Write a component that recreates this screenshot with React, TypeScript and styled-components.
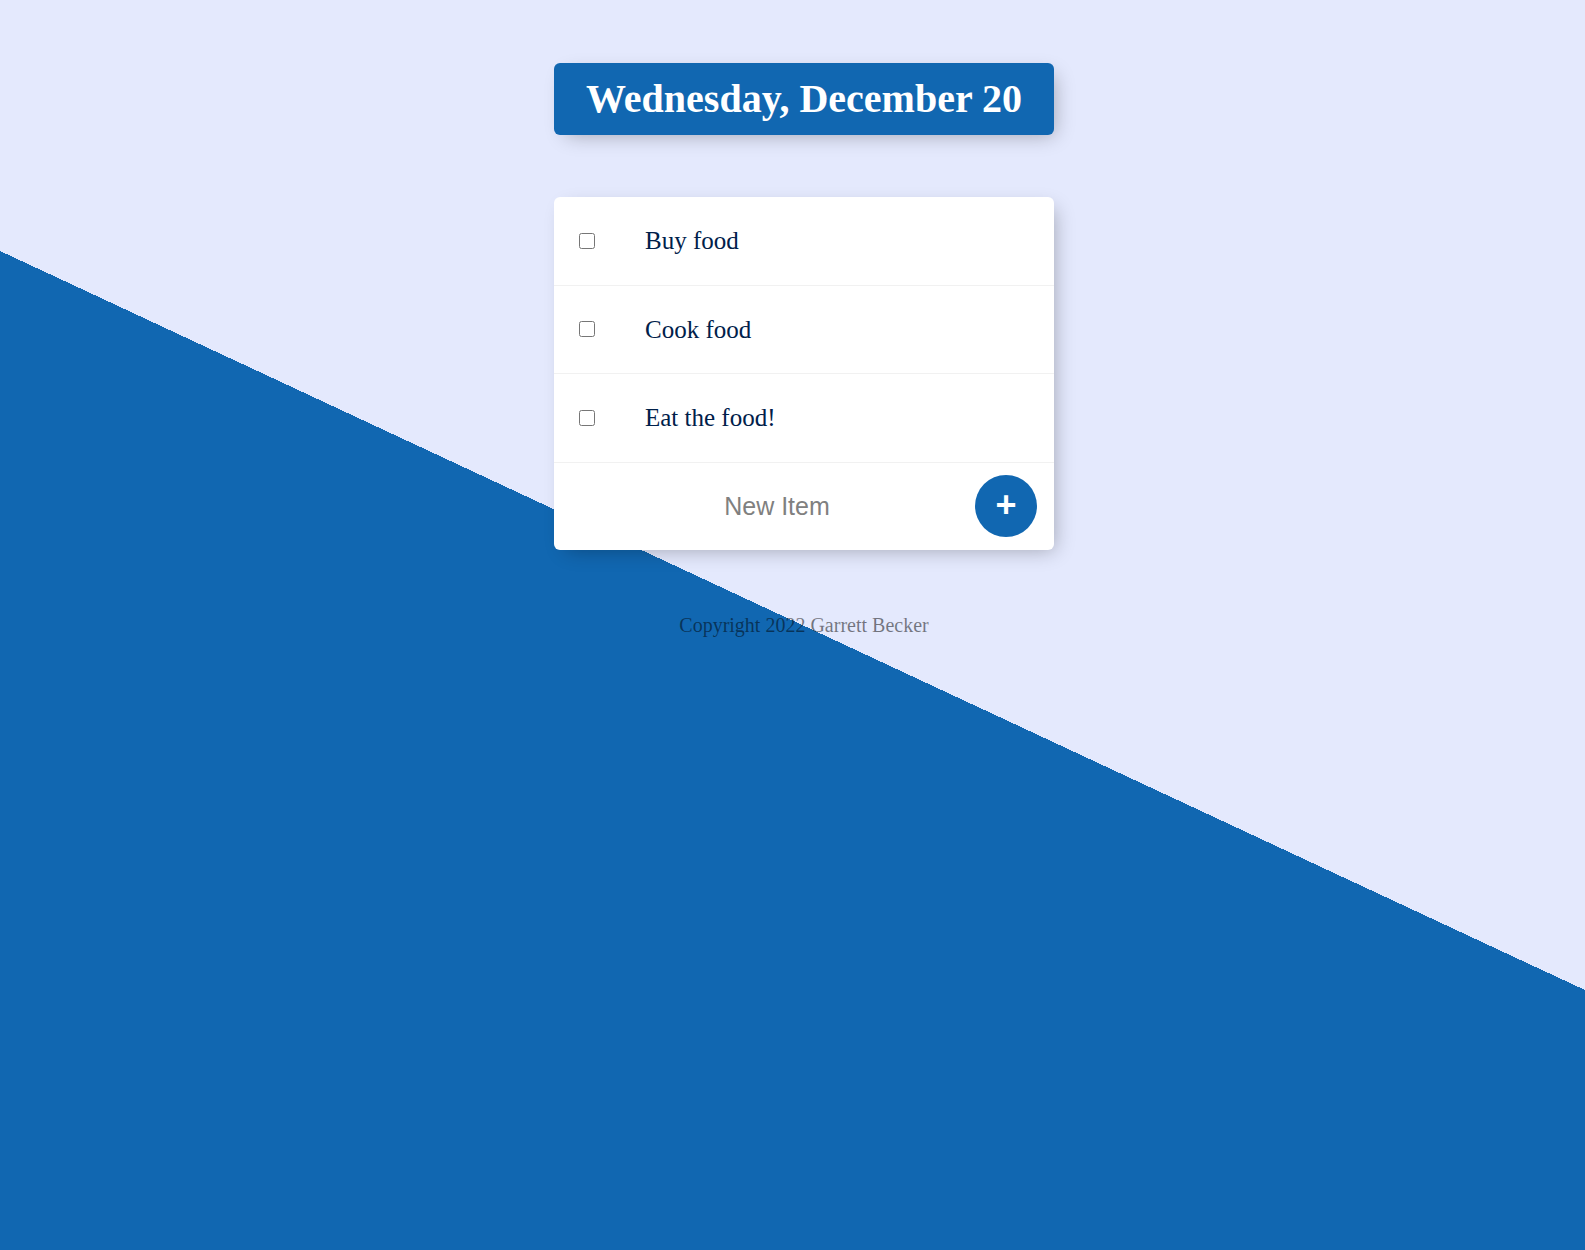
import React, { useState } from "react"
import styled, { createGlobalStyle } from "styled-components"

const BLUE = "#1167b1"
const LIGHT = "#e4e9fd"

const GlobalStyle = createGlobalStyle`
  html {
    min-height: 100%;
    background-color: ${BLUE};
    background-image: linear-gradient(25deg, ${BLUE} 50%, ${LIGHT} 50%);
    background-size: 100% 1241px;
    background-repeat: no-repeat;
  }
  body {
    margin: 0;
    font-family: "Liberation Serif", "Times New Roman", serif;
  }
`

const Page = styled.div`
  padding: 63px 0 0 23px;
  display: flex;
  flex-direction: column;
  align-items: center;
`

const Heading = styled.div`
  width: 500px;
  background: ${BLUE};
  border-radius: 6px;
  box-shadow: 6px 6px 19px -6px rgba(0, 0, 0, 0.3);
  text-align: center;
`

const Title = styled.h1`
  margin: 0;
  padding: 13px 12.5px 12.5px;
  font-size: 40px;
  line-height: 46px;
  font-weight: bold;
  color: #fff;
`

const Card = styled.div`
  width: 500px;
  margin-top: 62.5px;
  background: #fff;
  border-radius: 6px;
  box-shadow: 6px 6px 19px -6px rgba(0, 0, 0, 0.3);
`

const Item = styled.div`
  min-height: 87.5px;
  display: flex;
  align-items: center;
  border-bottom: 1px solid #f1f1f1;
`

const Check = styled.input`
  width: 16px;
  height: 16px;
  margin: 25px;
  flex-shrink: 0;
`

const Label = styled.p<{ $done: boolean }>`
  margin: 0;
  padding: 25px;
  font-size: 25px;
  line-height: 29px;
  font-weight: 200;
  color: #00204a;
  text-decoration: ${(p) => (p.$done ? "line-through" : "none")};
  text-decoration-color: ${BLUE};
`

const Form = styled.form`
  min-height: 87px;
  display: flex;
  align-items: center;
  margin-left: 25px;
`

const NewItem = styled.input`
  width: 391px;
  height: 75px;
  padding: 0 2.5px;
  border: none;
  background: transparent;
  text-align: center;
  font-family: "Liberation Sans", Arial, sans-serif;
  font-size: 25px;
  font-weight: 200;
  color: #000;
  &::placeholder {
    color: grey;
    opacity: 1;
  }
  &:focus {
    outline: none;
    box-shadow: inset 0 -4px 0 0 ${BLUE};
  }
`

const AddButton = styled.button`
  width: 62px;
  height: 62px;
  flex-shrink: 0;
  border-radius: 50%;
  border: 0;
  padding: 0 0 3px;
  background: ${BLUE};
  color: #fff;
  font-family: "Liberation Sans", Arial, sans-serif;
  font-size: 36px;
  font-weight: bold;
  line-height: 1;
  cursor: pointer;
`

const Footer = styled.footer`
  margin-top: 64px;
  font-size: 20px;
  line-height: 23px;
  color: rgba(0, 0, 0, 0.5);
  text-align: center;
`

const initial = ["Buy food", "Cook food", "Eat the food!"]

export default function App() {
  const [items, setItems] = useState(initial)
  const [done, setDone] = useState<boolean[]>(initial.map(() => false))
  const [text, setText] = useState("")

  const onSubmit = (e: React.FormEvent<HTMLFormElement>) => {
    e.preventDefault()
    if (text.trim() === "") return
    setItems([...items, text])
    setDone([...done, false])
    setText("")
  }

  const toggle = (i: number) => {
    setDone(done.map((d, j) => (j === i ? !d : d)))
  }

  return (
    <>
      <GlobalStyle />
      <Page>
        <Heading>
          <Title>Wednesday, December 20</Title>
        </Heading>
        <Card>
          {items.map((item, i) => (
            <Item key={i}>
              <Check type="checkbox" checked={done[i]} onChange={() => toggle(i)} />
              <Label $done={done[i]}>{item}</Label>
            </Item>
          ))}
          <Form onSubmit={onSubmit}>
            <NewItem
              type="text"
              placeholder="New Item"
              autoComplete="off"
              value={text}
              onChange={(e) => setText(e.target.value)}
            />
            <AddButton type="submit">+</AddButton>
          </Form>
        </Card>
        <Footer>Copyright 2022 Garrett Becker</Footer>
      </Page>
    </>
  )
}
